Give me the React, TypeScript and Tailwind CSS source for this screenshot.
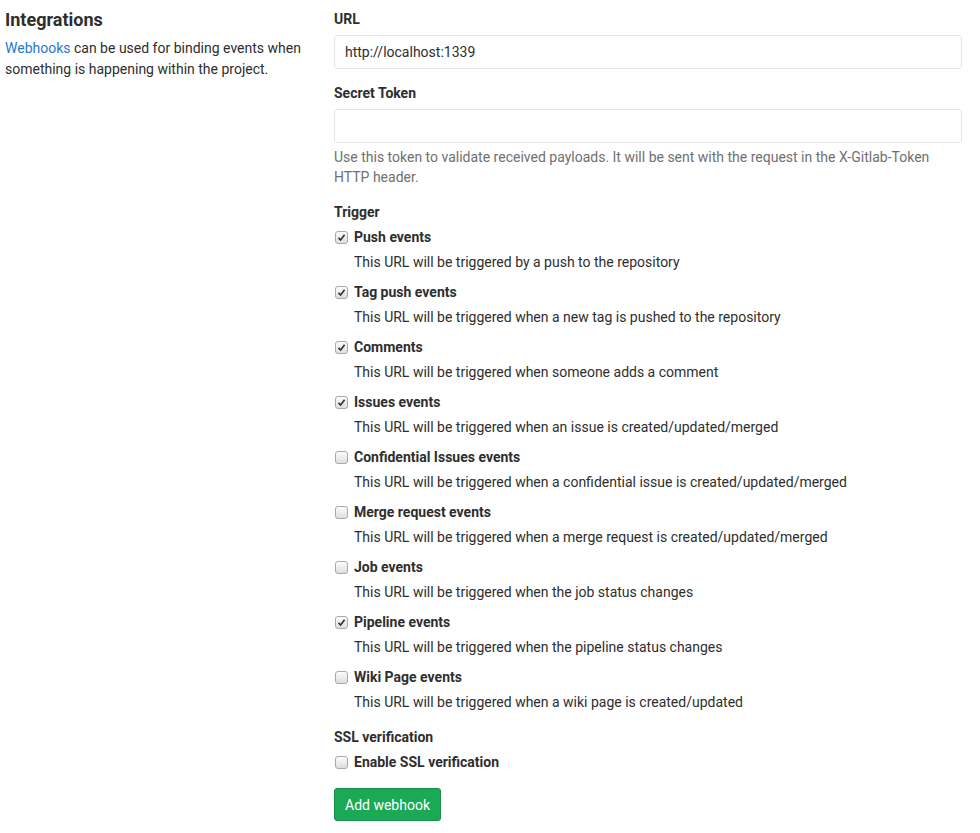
import React from "react";

const triggers = [
  { name: "Push events", desc: "This URL will be triggered by a push to the repository", on: true },
  { name: "Tag push events", desc: "This URL will be triggered when a new tag is pushed to the repository", on: true },
  { name: "Comments", desc: "This URL will be triggered when someone adds a comment", on: true },
  { name: "Issues events", desc: "This URL will be triggered when an issue is created/updated/merged", on: true },
  { name: "Confidential Issues events", desc: "This URL will be triggered when a confidential issue is created/updated/merged", on: false },
  { name: "Merge request events", desc: "This URL will be triggered when a merge request is created/updated/merged", on: false },
  { name: "Job events", desc: "This URL will be triggered when the job status changes", on: false },
  { name: "Pipeline events", desc: "This URL will be triggered when the pipeline status changes", on: true },
  { name: "Wiki Page events", desc: "This URL will be triggered when a wiki page is created/updated", on: false },
];

function Box({ on }: { on: boolean }) {
  return (
    <span className="flex h-[13px] w-[13px] shrink-0 items-center justify-center rounded-[3px] border border-[#a9a9a9] bg-gradient-to-b from-[#fcfcfc] to-[#dedede]">
      {on && (
        <svg width="9" height="9" viewBox="0 0 9 9">
          <path d="M1.5 4.8 L3.6 7 L7.6 1.8" fill="none" stroke="#333" strokeWidth="1.7" />
        </svg>
      )}
    </span>
  );
}

function Check({ name, on }: { name: string; on: boolean }) {
  return (
    <label className="flex h-5 items-center">
      <span className="ml-[1px] w-[19px]">
        <Box on={on} />
      </span>
      <span className="font-bold">{name}</span>
    </label>
  );
}

export default function App() {
  return (
    <div
      className="flex bg-white pt-[9px] text-[14px] leading-5 text-[#2e2e2e]"
      style={{ fontFamily: "Roboto, 'Liberation Sans', sans-serif" }}
    >
      <div className="w-[314px] shrink-0 pl-[5px]">
        <h4 className="-mt-[1px] mb-[6px] text-[18px] font-bold leading-[24px]">Integrations</h4>
        <p className="leading-[21px]">
          <a className="text-[#1f78d1]">Webhooks</a> can be used for binding events when
          something is happening within the project.
        </p>
      </div>
      <div className="ml-[20px] w-[628px]">
        <div className="font-bold">URL</div>
        <div className="mt-[6px] flex h-[34px] items-center rounded-[3px] border border-[#e5e5e5] px-[10px]">
          http://localhost:1339
        </div>
        <div className="mt-[14px] font-bold">Secret Token</div>
        <div className="mt-[6px] h-[34px] rounded-[3px] border border-[#e5e5e5]" />
        <p className="mt-[4px] text-[#707070]">
          Use this token to validate received payloads. It will be sent with the request in the X-Gitlab-Token
          HTTP header.
        </p>
        <div className="mt-[15px] font-bold">Trigger</div>
        <div className="mt-[5px] flex flex-col gap-[10px]">
          {triggers.map((t) => (
            <div key={t.name}>
              <Check name={t.name} on={t.on} />
              <div className="mt-[5px] pl-[20px]">{t.desc}</div>
            </div>
          ))}
        </div>
        <div className="mt-[15px] font-bold">SSL verification</div>
        <div className="mt-[5px]">
          <Check name="Enable SSL verification" on={false} />
        </div>
        <button className="mt-[16px] h-[33px] rounded-[3px] border border-[#168f48] bg-[#1aaa55] px-[10px] text-white">
          Add webhook
        </button>
      </div>
    </div>
  );
}
